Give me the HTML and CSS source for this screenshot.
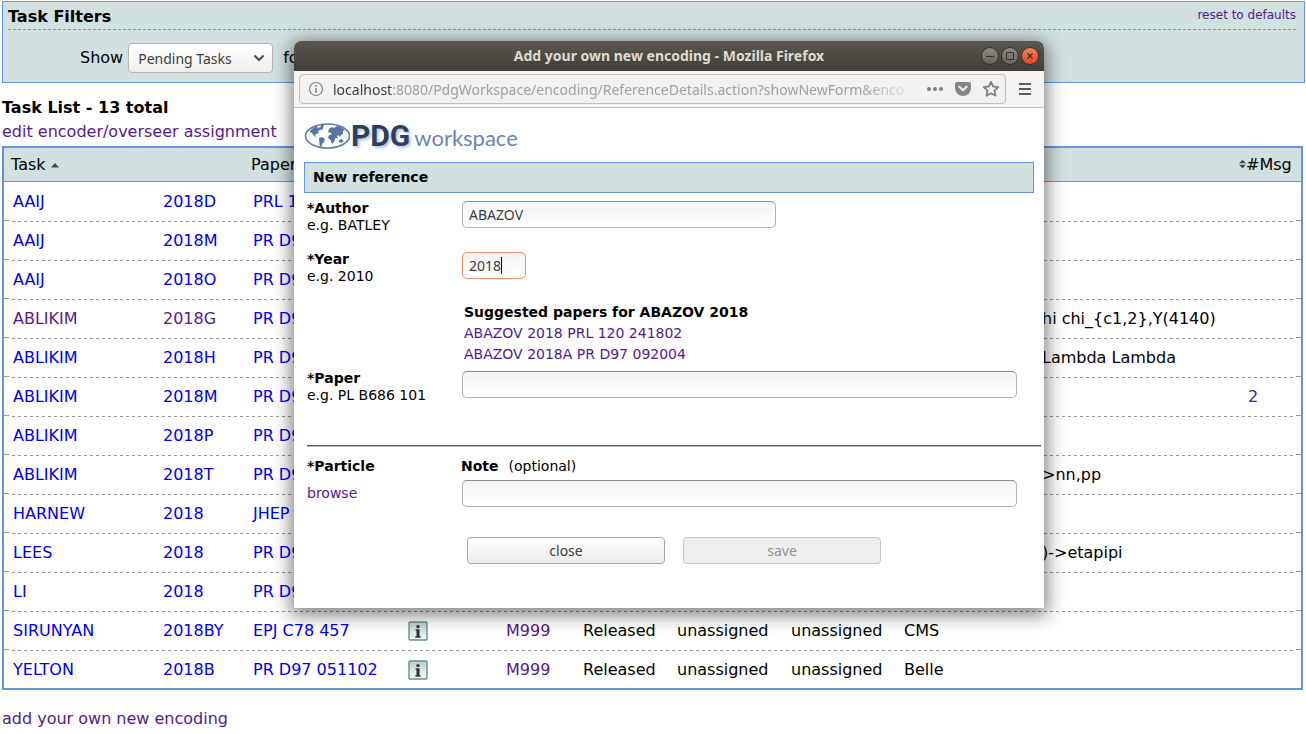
FILE: index.html
```html
<!DOCTYPE html>
<html lang="en">
<head>
<meta charset="utf-8">
<title>PDG Workspace</title>
<link rel="stylesheet" href="styles.css">
</head>
<body>
<svg class="defs" width="0" height="0" aria-hidden="true">
  <symbol id="info" viewBox="0 0 20 20">
    <linearGradient id="ig" x1="0" y1="0" x2="0" y2="1"><stop offset="0" stop-color="#b9cfcc"/><stop offset="1" stop-color="#f8fbfa"/></linearGradient>
    <rect x="1" y="1" width="18" height="18" rx="1" fill="url(#ig)" stroke="#64918c" stroke-width="1.4"/>
    <circle cx="10" cy="5.600" r="1.700" fill="#333"/>
    <path d="M7.500 8.300h4v7h1.200v1.400H7.300v-1.400h1.200V9.600h-1z" fill="#333"/>
  </symbol>
</svg>
<main class="page">
  <section class="filters">
    <div class="filters-head"><h2>Task Filters</h2><a class="visited" href="#">reset to defaults</a></div>
    <div class="filters-row">
      <label for="show">Show</label>
      <span class="select-wrap"><select id="show"><option>Pending Tasks</option></select><svg width="12" height="8" viewBox="0 0 12 8"><path d="M1.5 1.5 6 6l4.500-4.500" fill="none" stroke="#4a4a4a" stroke-width="2"/></svg></span>
      <span>for</span>
    </div>
  </section>
  <h2 class="list-title">Task List - 13 total</h2>
  <a class="visited edit" href="#">edit encoder/overseer assignment</a>
  <table class="tasks">
    <colgroup><col class="c-task"><col class="c-year"><col class="c-paper"><col class="c-info"><col class="c-node"><col class="c-status"><col class="c-enc"><col class="c-over"><col><col class="c-msg"></colgroup>
    <thead><tr><th>Task <svg width="8" height="5" viewBox="0 0 8 5"><path d="M0 4.500 4 0l4 4.500z" fill="#3c4a5c"/></svg></th><th></th><th>Paper</th><th></th><th></th><th></th><th></th><th></th><th></th><th class="msg"><svg width="7" height="10" viewBox="0 0 8 10"><path d="M0 4.200 4 0l4 4.200zM0 5.800 4 10l4-4.200z" fill="#3c4a5c"/></svg>#Msg</th></tr></thead>
    <tbody>
      <tr><td><a href="#">AAIJ</a></td><td><a href="#">2018D</a></td><td><a href="#">PRL 12</a></td><td></td><td></td><td></td><td></td><td></td><td></td><td></td></tr>
      <tr><td><a href="#">AAIJ</a></td><td><a href="#">2018M</a></td><td><a href="#">PR D97</a></td><td></td><td></td><td></td><td></td><td></td><td></td><td></td></tr>
      <tr><td><a href="#">AAIJ</a></td><td><a href="#">2018O</a></td><td><a href="#">PR D97</a></td><td></td><td></td><td></td><td></td><td></td><td></td><td></td></tr>
      <tr><td><a class="visited" href="#">ABLIKIM</a></td><td><a class="visited" href="#">2018G</a></td><td><a href="#">PR D97</a></td><td></td><td></td><td></td><td></td><td></td><td class="tail">hi chi_{c1,2},Y(4140)</td><td></td></tr>
      <tr><td><a href="#">ABLIKIM</a></td><td><a href="#">2018H</a></td><td><a href="#">PR D97</a></td><td></td><td></td><td></td><td></td><td></td><td class="tail">Lambda Lambda</td><td></td></tr>
      <tr><td><a href="#">ABLIKIM</a></td><td><a href="#">2018M</a></td><td><a href="#">PR D97</a></td><td></td><td></td><td></td><td></td><td></td><td></td><td><a class="visited" href="#">2</a></td></tr>
      <tr><td><a href="#">ABLIKIM</a></td><td><a href="#">2018P</a></td><td><a href="#">PR D97</a></td><td></td><td></td><td></td><td></td><td></td><td></td><td></td></tr>
      <tr><td><a href="#">ABLIKIM</a></td><td><a href="#">2018T</a></td><td><a href="#">PR D97</a></td><td></td><td></td><td></td><td></td><td></td><td class="tail">&gt;nn,pp</td><td></td></tr>
      <tr><td><a href="#">HARNEW</a></td><td><a href="#">2018</a></td><td><a href="#">JHEP</a></td><td></td><td></td><td></td><td></td><td></td><td></td><td></td></tr>
      <tr><td><a href="#">LEES</a></td><td><a href="#">2018</a></td><td><a href="#">PR D97</a></td><td></td><td></td><td></td><td></td><td></td><td class="tail">)-&gt;etapipi</td><td></td></tr>
      <tr><td><a href="#">LI</a></td><td><a href="#">2018</a></td><td><a href="#">PR D97</a></td><td></td><td></td><td></td><td></td><td></td><td></td><td></td></tr>
      <tr><td><a href="#">SIRUNYAN</a></td><td><a href="#">2018BY</a></td><td><a href="#">EPJ C78 457</a></td><td><svg class="info" width="20" height="20"><use href="#info"/></svg></td><td><a class="visited" href="#">M999</a></td><td>Released</td><td>unassigned</td><td>unassigned</td><td>CMS</td><td></td></tr>
      <tr><td><a href="#">YELTON</a></td><td><a href="#">2018B</a></td><td><a href="#">PR D97 051102</a></td><td><svg class="info" width="20" height="20"><use href="#info"/></svg></td><td><a class="visited" href="#">M999</a></td><td>Released</td><td>unassigned</td><td>unassigned</td><td>Belle</td><td></td></tr>
    </tbody>
  </table>
  <a class="visited add" href="#">add your own new encoding</a>
</main>

<section class="window" role="dialog" aria-labelledby="wtitle">
  <header class="titlebar">
    <h1 id="wtitle">Add your own new encoding - Mozilla Firefox</h1>
    <div class="controls">
      <button class="ctl" aria-label="Minimize"><svg width="10" height="10"><path d="M1 5.500h8" stroke="#33322e"/></svg></button>
      <button class="ctl" aria-label="Maximize"><svg width="10" height="10"><path d="M1.500 1.500h7v7h-7z" fill="none" stroke="#33322e"/></svg></button>
      <button class="ctl red" aria-label="Close window"><svg width="10" height="10"><path d="M2.500 2.500l5 5m0-5l-5 5" stroke="#33322e" stroke-width="1.400"/></svg></button>
    </div>
  </header>
  <div class="toolbar">
    <div class="urlbar">
      <svg width="16" height="16"><circle cx="8" cy="8" r="6.500" fill="none" stroke="#858585" stroke-width="1.200"/><path d="M8 7v5M8 4v1.800" stroke="#858585" stroke-width="1.600"/></svg>
      <div class="url"><b>localhost</b>:8080/PdgWorkspace/encoding/ReferenceDetails.action?showNewForm&amp;enco</div>
      <svg class="dots" width="16" height="16"><g fill="#7d7d7d"><circle cx="2" cy="8" r="2"/><circle cx="8" cy="8" r="2"/><circle cx="14" cy="8" r="2"/></g></svg>
      <svg class="pocket" width="16" height="16"><path d="M2 1h12a2 2 0 0 1 2 2v4a8 8 0 0 1-16 0V3a2 2 0 0 1 2-2z" fill="#858585"/><path d="M4.300 5.800 8 9.300l3.700-3.500" fill="none" stroke="#f2f1f0" stroke-width="2" stroke-linecap="round" stroke-linejoin="round"/></svg>
      <svg width="18" height="18" viewBox="0 0 18 18"><path d="M9 1.800l2.200 4.700 5.100.6-3.800 3.500 1 5.100L9 13.200l-4.500 2.500 1-5.100L1.700 7.100l5.100-.6z" fill="none" stroke="#808080" stroke-width="1.800" stroke-linejoin="round"/></svg>
    </div>
    <button class="menu" aria-label="Menu"><svg width="12" height="12"><path d="M0 1h12M0 6h12M0 11h12" stroke="#5a5a5a" stroke-width="2"/></svg></button>
  </div>
  <div class="content">
    <div class="logo">
      <svg width="47" height="28" viewBox="0 0 47 28"><ellipse cx="23.500" cy="14" rx="22" ry="12" fill="#fff" stroke="#5f7ba3" stroke-width="1.500"/>
      <g fill="#54769f"><path d="M6 9l3-3 4-2 1 2 3-1-1 3-2 1 1 2-3 1-1 2 2 2-2-1-3-4-2-1zM17 3l3-.5-1 4-2 2-1-2zM15 16l3-1 3 2-1 3-2 2-1 4-1.500-3z"/><path d="M24 10l1-3 3-2 2 1 3-2 4 1 4 3-2 1 0 3-2 1-1 2-2-2-1 1 1 2-2 0-2-3-2 0-1-2zM25 13l4-1 3 3-1 2-1 3-2 2-1.500-4-2.500-2zM35 18l3-1 1.500 2-2 2-2.500-1z"/></g></svg>
      <span class="pdg">PDG</span><span class="ws">workspace</span>
    </div>
    <h2 class="bar">New reference</h2>
    <form>
      <div class="field author"><label for="author"><b>*Author</b><span>e.g. BATLEY</span></label><input id="author" type="text" value="ABAZOV"></div>
      <div class="field year"><label for="year"><b>*Year</b><span>e.g. 2010</span></label><div class="caret-box"><input id="year" type="text" value="2018"><i class="caret"></i></div></div>
      <div class="suggest"><b>Suggested papers for ABAZOV 2018</b><a class="visited" href="#">ABAZOV 2018 PRL 120 241802</a><a class="visited" href="#">ABAZOV 2018A PR D97 092004</a></div>
      <div class="field paper"><label for="paper"><b>*Paper</b><span>e.g. PL B686 101</span></label><input id="paper" type="text"></div>
      <hr>
      <div class="heads"><b>*Particle</b><label for="note"><b>Note</b> (optional)</label></div>
      <div class="field note"><a class="visited" href="#">browse</a><input id="note" type="text"></div>
      <div class="buttons"><button type="button">close</button><button type="button" disabled>save</button></div>
    </form>
  </div>
</section>
</body>
</html>
```
FILE: styles.css
```css
* { box-sizing: border-box; }
body { margin: 0; background: #fff; color: #000; font: 16px/20px "DejaVu Sans", sans-serif; overflow: hidden; }
h1, h2 { margin: 0; font-size: inherit; }
svg { flex: none; }
.defs { position: absolute; }
a { color: #0000ee; text-decoration: none; }
a.visited { color: #551a8b; }
.page { padding: 1px 1px 0 2px; display: flex; flex-direction: column; align-items: flex-start; }

.filters { width: 100%; height: 82px; border: 1px solid #6495e0; background: #d2e0df; padding: 5px 8px 0 5px; }
.filters-head { display: flex; justify-content: space-between; height: 23px; border-bottom: 1px dashed #6495e0; }
.filters-head a { font-size: 12px; line-height: 16px; }
.filters-row { display: flex; align-items: center; padding: 13px 0 0 72px; line-height: 22px; }
.select-wrap { position: relative; display: flex; margin: 0 10px 0 5px; }
.select-wrap svg { position: absolute; right: 8px; top: 11px; pointer-events: none; }
select { appearance: none; width: 145px; height: 30px; padding: 0 9px; border: 1px solid #b6b6b3; border-radius: 4px; background: linear-gradient(#fff, #f0efee); font: 14px "Noto Sans", sans-serif; color: #3c3c3c; }

.list-title { margin-top: 15px; }
.edit { margin: 4px 0; }
.tasks { width: calc(100% - 2px); table-layout: fixed; border-spacing: 0; border: 2px solid #6495e0; }
.c-task { width: 150px; }
.c-year { width: 90px; }
.c-paper { width: 155px; }
.c-info { width: 98px; }
.c-node { width: 77px; }
.c-status { width: 94px; }
.c-enc { width: 114px; }
.c-over { width: 113px; }
.c-msg { width: 62px; }
th { height: 34px; padding: 0 0 0 7px; background: #d2e0df; border-bottom: 1px solid #6495e0; font-weight: normal; text-align: left; white-space: nowrap; }
th svg { vertical-align: 2px; }
th.msg { padding-left: 0; }
th.msg svg { vertical-align: 1px; }
td { height: 39px; padding: 0 0 0 9px; white-space: nowrap; }
tr:last-child td { height: 38px; padding-top: 1px; }
td.tail { padding-left: 147px; }
tbody tr {
  --ticks: linear-gradient(#999, #999);
  --dashes: repeating-linear-gradient(90deg, transparent 0 2px, #999 2px 5px, transparent 5px 6px);
  background:
    var(--ticks) left bottom / 5px 1px no-repeat,
    var(--ticks) right bottom / 5px 1px no-repeat,
    var(--dashes) 6px top / 1284px 1px no-repeat;
}
tbody tr:first-child { background: var(--ticks) left bottom / 5px 1px no-repeat, var(--ticks) right bottom / 5px 1px no-repeat; }
tbody tr:last-child { background: var(--dashes) 6px top / 1284px 1px no-repeat; }
.info { display: block; }
.add { margin-top: 19px; }

.window { position: absolute; left: 294px; top: 41px; width: 750px; height: 567px; background: #fff; border-radius: 7px 7px 0 0; box-shadow: 0 4px 18px 3px rgba(0, 0, 0, .5); font-size: 14px; line-height: 17px; }
.titlebar { position: relative; height: 30px; border-radius: 7px 7px 0 0; background: linear-gradient(#5a574f, #403e3a); color: #dfdbd2; display: flex; align-items: center; justify-content: center; }
.titlebar h1 { font: bold 14px/20px "Noto Sans", sans-serif; }
.controls { position: absolute; right: 5px; top: 6px; display: flex; gap: 2px; }
.ctl { width: 18px; height: 18px; padding: 0; border: 1px solid #33322e; border-radius: 9px; background: linear-gradient(#8c8a83, #65635d); display: flex; align-items: center; justify-content: center; }
.ctl.red { background: linear-gradient(#f5825d, #e2491a); }
.toolbar { display: flex; align-items: center; height: 37px; padding: 0 13px 0 5px; gap: 13px; background: #f5f4f3; border-bottom: 1px solid #c4c2bf; }
.urlbar { flex: 1; min-width: 0; height: 30px; border: 1px solid #c1bfbd; border-radius: 4px; background: #f2f1f0; display: flex; align-items: center; padding: 0 5px 0 8px; }
.url { flex: 1; min-width: 0; margin-left: 9px; padding-top: 1px; white-space: nowrap; font: 14px/24px "Noto Sans", sans-serif; color: #a0a09f; mask-image: linear-gradient(90deg, #000 calc(100% - 60px), transparent); }
.url b { font-weight: normal; color: #3c3c3c; }
.dots { margin: 0 12px 0 9px; }
.pocket { margin-right: 11px; }
.menu { border: 0; padding: 0; background: none; display: flex; }
.content { padding: 12px 10px 0; }
.logo { display: flex; align-items: center; height: 32px; }
.pdg { font: bold 30px/32px Roboto, sans-serif; color: #2b3f63; text-shadow: 2px 2px 3px #b9c3d2; }
.ws { margin-left: 4px; padding-top: 4px; font: 22px/28px Lato, sans-serif; color: #6a86b3; }
.bar { margin-top: 10px; height: 31px; padding: 0 8px; border: 1px solid #6495e0; background: #d2e0df; line-height: 29px; }
form { padding: 8px 0 0 3px; }
.field, .heads { display: grid; grid-template-columns: 155px 1fr; align-items: start; }
.field label { margin-top: -1px; }
.field label > * { display: block; }
input { width: 555px; height: 27px; padding: 0 6px; border: 1px solid #b0afad; border-top-color: #8c8b89; border-radius: 5px; background: linear-gradient(#f4f4f4, #fff); font: 14px "Noto Sans", sans-serif; color: #3c3c3c; outline: 0; }
.author { height: 51px; }
.year { height: 50px; }
#author { width: 314px; }
#year { width: 64px; border-color: #e79470; }
.caret-box { position: relative; }
.caret { position: absolute; left: 39px; top: 5px; width: 1px; height: 17px; background: #000; }
.suggest { padding-left: 157px; display: flex; flex-direction: column; line-height: 21px; }
.paper { padding-top: 6px; }
hr { height: 2px; margin: 41px -7px 0 0; border: 0; border-top: 1px solid #555; background: #bbb; }
.heads { margin-top: 11px; }
.heads label { margin-left: -1px; display: flex; gap: 10px; }
.note { margin-top: 5px; line-height: 27px; }
.buttons { display: flex; gap: 18px; padding: 30px 0 0 160px; }
.buttons button { width: 198px; height: 27px; border: 1px solid #a6a5a3; border-radius: 4px; background: linear-gradient(#fff, #edebea); font: 14px "Noto Sans", sans-serif; color: #3c3c3c; }
.buttons button:disabled { border-color: #c8c7c6; background: #eee; color: #929190; }
```
